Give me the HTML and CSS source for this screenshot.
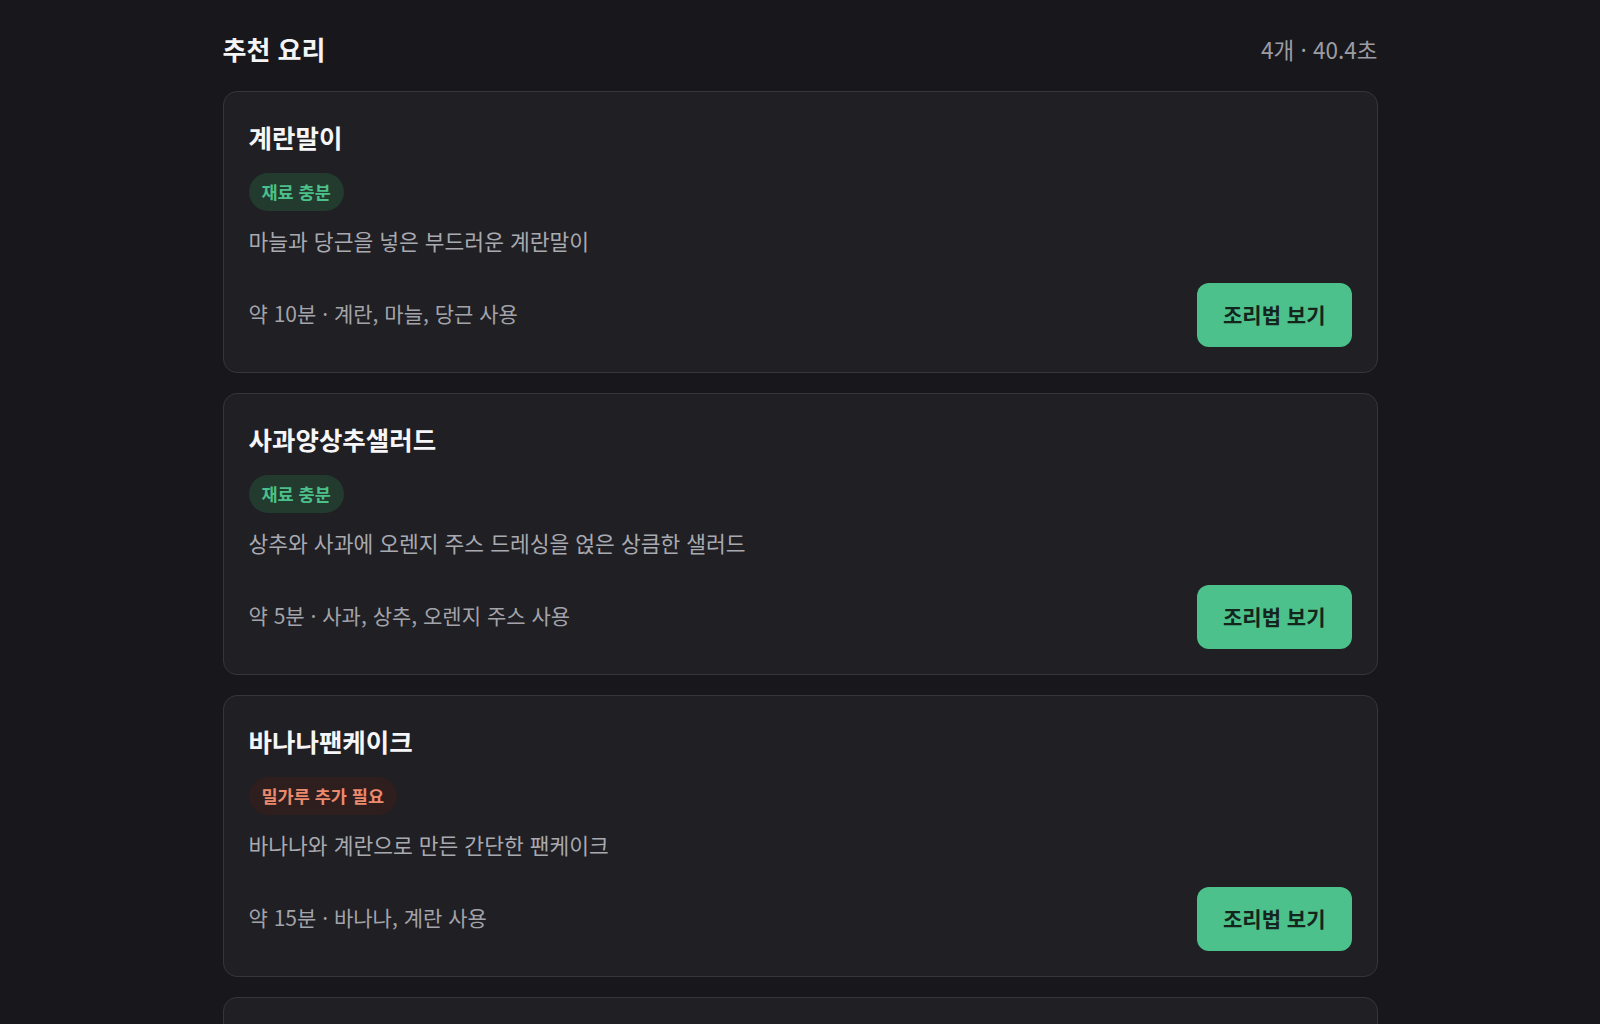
FILE: index.html
```html
<!DOCTYPE html>
<html lang="ko">
<head>
<meta charset="utf-8">
<title>추천 요리</title>
<link rel="stylesheet" href="styles.css">
</head>
<body>
<main class="page">
  <header class="head">
    <h1 class="head-title">추천 요리</h1>
    <span class="head-meta">4개 · 40.4초</span>
  </header>
  <section class="list">
    <article class="card">
      <h2 class="card-title">계란말이</h2>
      <span class="badge badge-ok">재료 충분</span>
      <p class="card-desc">마늘과 당근을 넣은 부드러운 계란말이</p>
      <div class="card-foot">
        <span class="card-meta">약 10분 · 계란, 마늘, 당근 사용</span>
        <button class="btn">조리법 보기</button>
      </div>
    </article>
    <article class="card">
      <h2 class="card-title">사과양상추샐러드</h2>
      <span class="badge badge-ok">재료 충분</span>
      <p class="card-desc">상추와 사과에 오렌지 주스 드레싱을 얹은 상큼한 샐러드</p>
      <div class="card-foot">
        <span class="card-meta">약 5분 · 사과, 상추, 오렌지 주스 사용</span>
        <button class="btn">조리법 보기</button>
      </div>
    </article>
    <article class="card">
      <h2 class="card-title">바나나팬케이크</h2>
      <span class="badge badge-warn">밀가루 추가 필요</span>
      <p class="card-desc">바나나와 계란으로 만든 간단한 팬케이크</p>
      <div class="card-foot">
        <span class="card-meta">약 15분 · 바나나, 계란 사용</span>
        <button class="btn">조리법 보기</button>
      </div>
    </article>
    <article class="card">
      <h2 class="card-title">감자볶음</h2>
      <span class="badge badge-ok">재료 충분</span>
      <p class="card-desc">양파와 함께 볶은 고소한 감자볶음</p>
      <div class="card-foot">
        <span class="card-meta">약 20분 · 감자, 양파 사용</span>
        <button class="btn">조리법 보기</button>
      </div>
    </article>
  </section>
</main>
</body>
</html>
```

FILE: styles.css
```css
* { box-sizing: border-box; }
html, body {
  margin: 0;
  background: #18181c;
  color: #f2f2f4;
  font-family: "Noto Sans CJK KR", "Noto Sans", sans-serif;
}
.page {
  width: 1155px;
  margin: 0 auto;
  padding-top: 32px;
}
.head {
  display: flex;
  justify-content: space-between;
  align-items: center;
  height: 34px;
  margin-bottom: 25px;
}
.head-title {
  margin: 0;
  font-size: 26px;
  font-weight: 700;
  line-height: 34px;
  color: #f4f4f6;
}
.head-meta {
  font-size: 22.5px;
  color: #9c9ca4;
  line-height: 34px;
}
.list {
  display: flex;
  flex-direction: column;
  gap: 20px;
}
.card {
  display: flex;
  flex-direction: column;
  align-items: flex-start;
  background: #1f1f24;
  border: 1px solid #35353b;
  border-radius: 14px;
  padding: 27px 25px 25px 25px;
}
.card-title {
  margin: 0;
  font-size: 25.5px;
  font-weight: 700;
  line-height: 36px;
  color: #f6f6f8;
}
.badge {
  margin-top: 18px;
  height: 38px;
  padding: 0 13px;
  border-radius: 19px;
  font-size: 17.5px;
  font-weight: 700;
  line-height: 37px;
}
.badge-ok {
  background: #233a2f;
  color: #4cc08a;
}
.badge-warn {
  background: #2e1f1e;
  color: #ec8a6e;
}
.card-desc {
  margin: 15px 0 0;
  font-size: 21.5px;
  line-height: 30px;
  color: #a9a9b0;
}
.card-foot {
  align-self: stretch;
  margin-top: 27px;
  display: flex;
  justify-content: space-between;
  align-items: center;
}
.card-meta {
  font-size: 21px;
  line-height: 30px;
  padding-bottom: 5px;
  color: #a3a3aa;
}
.btn {
  height: 64px;
  padding: 0 26px 3px;
  border: none;
  border-radius: 12px;
  background: #4dc18b;
  color: #13251c;
  font-family: "Noto Sans CJK KR", "Noto Sans", sans-serif;
  font-size: 21px;
  font-weight: 700;
  cursor: pointer;
}
```
